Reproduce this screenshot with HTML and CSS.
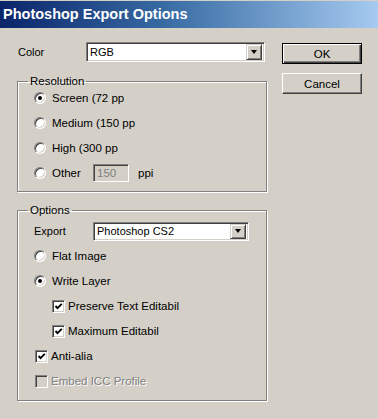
FILE: index.html
```html
<!DOCTYPE html>
<html lang="en">
<head>
    <meta charset="UTF-8">
    <title>Photoshop Export Options</title>
    <link rel="stylesheet" href="styles.css">
</head>
<body>
    <div class="dialog">
        <div class="titlebar">Photoshop Export Options</div>

        <div class="content">
            <div class="main">
                <div class="field-row">
                    <span class="field-label color-label">Color</span>
                    <div class="select color-select">
                        <span class="select-value">RGB</span>
                        <span class="select-button"><span class="arrow"></span></span>
                    </div>
                </div>

                <fieldset class="group resolution">
                    <legend>Resolution</legend>
                    <div class="option">
                        <span class="radio checked"></span>
                        <span class="option-text">Screen (72 pp</span>
                    </div>
                    <div class="option">
                        <span class="radio"></span>
                        <span class="option-text">Medium (150 pp</span>
                    </div>
                    <div class="option">
                        <span class="radio"></span>
                        <span class="option-text">High (300 pp</span>
                    </div>
                    <div class="option">
                        <span class="radio"></span>
                        <span class="option-text other-text">Other</span>
                        <span class="number-box">150</span>
                        <span class="unit">ppi</span>
                    </div>
                </fieldset>

                <fieldset class="group options">
                    <legend>Options</legend>
                    <div class="field-row export-row">
                        <span class="field-label export-label">Export</span>
                        <div class="select export-select">
                            <span class="select-value">Photoshop CS2</span>
                            <span class="select-button"><span class="arrow"></span></span>
                        </div>
                    </div>
                    <div class="option">
                        <span class="radio"></span>
                        <span class="option-text">Flat Image</span>
                    </div>
                    <div class="option">
                        <span class="radio checked"></span>
                        <span class="option-text">Write Layer</span>
                    </div>
                    <div class="option sub">
                        <span class="checkbox checked">
                            <svg viewBox="0 0 9 9" width="9" height="9"><path d="M1.5 4 L3.5 6.2 L7.8 1.8" fill="none" stroke="#000" stroke-width="1.9"/></svg>
                        </span>
                        <span class="option-text">Preserve Text Editabil</span>
                    </div>
                    <div class="option sub">
                        <span class="checkbox checked">
                            <svg viewBox="0 0 9 9" width="9" height="9"><path d="M1.5 4 L3.5 6.2 L7.8 1.8" fill="none" stroke="#000" stroke-width="1.9"/></svg>
                        </span>
                        <span class="option-text">Maximum Editabil</span>
                    </div>
                    <div class="option boxed">
                        <span class="checkbox checked">
                            <svg viewBox="0 0 9 9" width="9" height="9"><path d="M1.5 4 L3.5 6.2 L7.8 1.8" fill="none" stroke="#000" stroke-width="1.9"/></svg>
                        </span>
                        <span class="option-text">Anti-alia</span>
                    </div>
                    <div class="option boxed disabled">
                        <span class="checkbox"></span>
                        <span class="option-text">Embed ICC Profile</span>
                    </div>
                </fieldset>
            </div>

            <div class="side">
                <div class="button default">OK</div>
                <div class="button">Cancel</div>
            </div>
        </div>
    </div>
</body>
</html>
```

FILE: styles.css
```css
* {
    margin: 0;
    padding: 0;
    box-sizing: border-box;
}

body {
    font-family: 'Liberation Sans', Arial, sans-serif;
    font-size: 11px;
    color: #000;
    background: #d4d0c8;
}

.dialog {
    width: 378px;
    height: 419px;
    padding-top: 1px;
    background: #d4d0c8;
    overflow: hidden;
}

.titlebar {
    height: 27px;
    line-height: 27px;
    padding-left: 3px;
    background: linear-gradient(90deg, #0a246a, #3a6ea5 45%, #a6caf0);
    color: #fff;
    font-size: 14.5px;
    font-weight: 700;
    white-space: nowrap;
}

.content {
    display: flex;
    padding: 14px 0 0 17px;
}

.main {
    width: 250px;
}

.side {
    display: flex;
    flex-direction: column;
    gap: 9px;
    margin-left: 15px;
    padding-top: 1px;
}

/* buttons */
.button {
    width: 80px;
    height: 21px;
    display: flex;
    align-items: center;
    justify-content: center;
    font-size: 11.5px;
    background: #d4d0c8;
    border: 1px solid;
    border-color: #fff #404040 #404040 #fff;
    box-shadow: inset -1px -1px 0 #808080;
}

.button.default {
    border: 1px solid #000;
    box-shadow: inset 1px 1px 0 #fff, inset -1px -1px 0 #404040, inset -2px -2px 0 #808080;
}

/* labelled rows */
.field-row {
    display: flex;
    align-items: center;
    height: 20px;
}

.field-label {
    flex: none;
}

.color-label {
    width: 69px;
    padding-left: 1px;
}

.select {
    display: flex;
    align-items: center;
    height: 20px;
    background: #fff;
    border: 1px solid;
    border-color: #808080 #fff #fff #808080;
    box-shadow: inset 1px 1px 0 #404040, inset -1px -1px 0 #d4d0c8;
    padding: 2px;
}

.color-select {
    width: 179px;
}

.select-value {
    flex: 1;
    white-space: nowrap;
    padding-left: 1px;
}

.select-button {
    width: 16px;
    height: 16px;
    flex: none;
    display: flex;
    align-items: center;
    justify-content: center;
    background: #d4d0c8;
    border: 1px solid;
    border-color: #d4d0c8 #404040 #404040 #d4d0c8;
    box-shadow: inset 1px 1px 0 #fff, inset -1px -1px 0 #808080;
}

.arrow {
    width: 0;
    height: 0;
    border-left: 3.5px solid transparent;
    border-right: 3.5px solid transparent;
    border-top: 4px solid #000;
}

/* group boxes */
.group {
    width: 100%;
    border: 1px solid #808080;
    box-shadow: inset 1px 1px 0 #fff, 1px 1px 0 #fff;
    padding: 0 0 8px 10px;
}

.group legend {
    padding: 0 2px;
    line-height: 13px;
    font-size: 11.5px;
}

.resolution {
    margin-top: 13px;
    display: flex;
    flex-direction: column;
    gap: 5px;
}

.options {
    margin-top: 12px;
    padding-top: 4px;
    padding-bottom: 9px;
}

.options .option {
    margin-top: 5px;
}

.export-label {
    width: 59px;
    margin-left: 6px;
}

.export-select {
    width: 156px;
    height: 19px;
}

.export-select .select-button {
    height: 15px;
}

/* radios & checkboxes */
.option {
    display: flex;
    align-items: center;
    height: 20px;
    margin-left: 6px;
    font-size: 11.5px;
}

.option.sub {
    margin-left: 24px;
}

.option.boxed {
    margin-left: 7px;
}

.option-text {
    white-space: nowrap;
    flex: none;
}

.other-text {
    width: 41px;
}

.radio {
    width: 12px;
    height: 12px;
    flex: none;
    margin-right: 6px;
    display: flex;
    align-items: center;
    justify-content: center;
    border-radius: 50%;
    background: #fff;
    border: 1px solid;
    border-color: #808080 #fff #fff #808080;
    box-shadow: inset 1px 1px 0 #404040, inset -1px -1px 0 #d4d0c8;
}

.radio.checked::after {
    content: '';
    width: 4px;
    height: 4px;
    border-radius: 50%;
    background: #000;
}

.checkbox {
    width: 13px;
    height: 13px;
    flex: none;
    margin-right: 3px;
    display: flex;
    align-items: center;
    justify-content: center;
    background: #fff;
    border: 1px solid;
    border-color: #808080 #fff #fff #808080;
    box-shadow: inset 1px 1px 0 #404040, inset -1px -1px 0 #d4d0c8;
}

.disabled .checkbox {
    background: #d4d0c8;
}

.disabled .option-text {
    color: #808080;
    text-shadow: 1px 1px 0 #fff;
}

.number-box {
    width: 36px;
    height: 18px;
    display: flex;
    align-items: center;
    padding-left: 3px;
    color: #808080;
    background: #d4d0c8;
    border: 1px solid;
    border-color: #808080 #fff #fff #808080;
    box-shadow: inset 1px 1px 0 #404040, inset -1px -1px 0 #d4d0c8;
}

.unit {
    margin-left: 9px;
}
```
